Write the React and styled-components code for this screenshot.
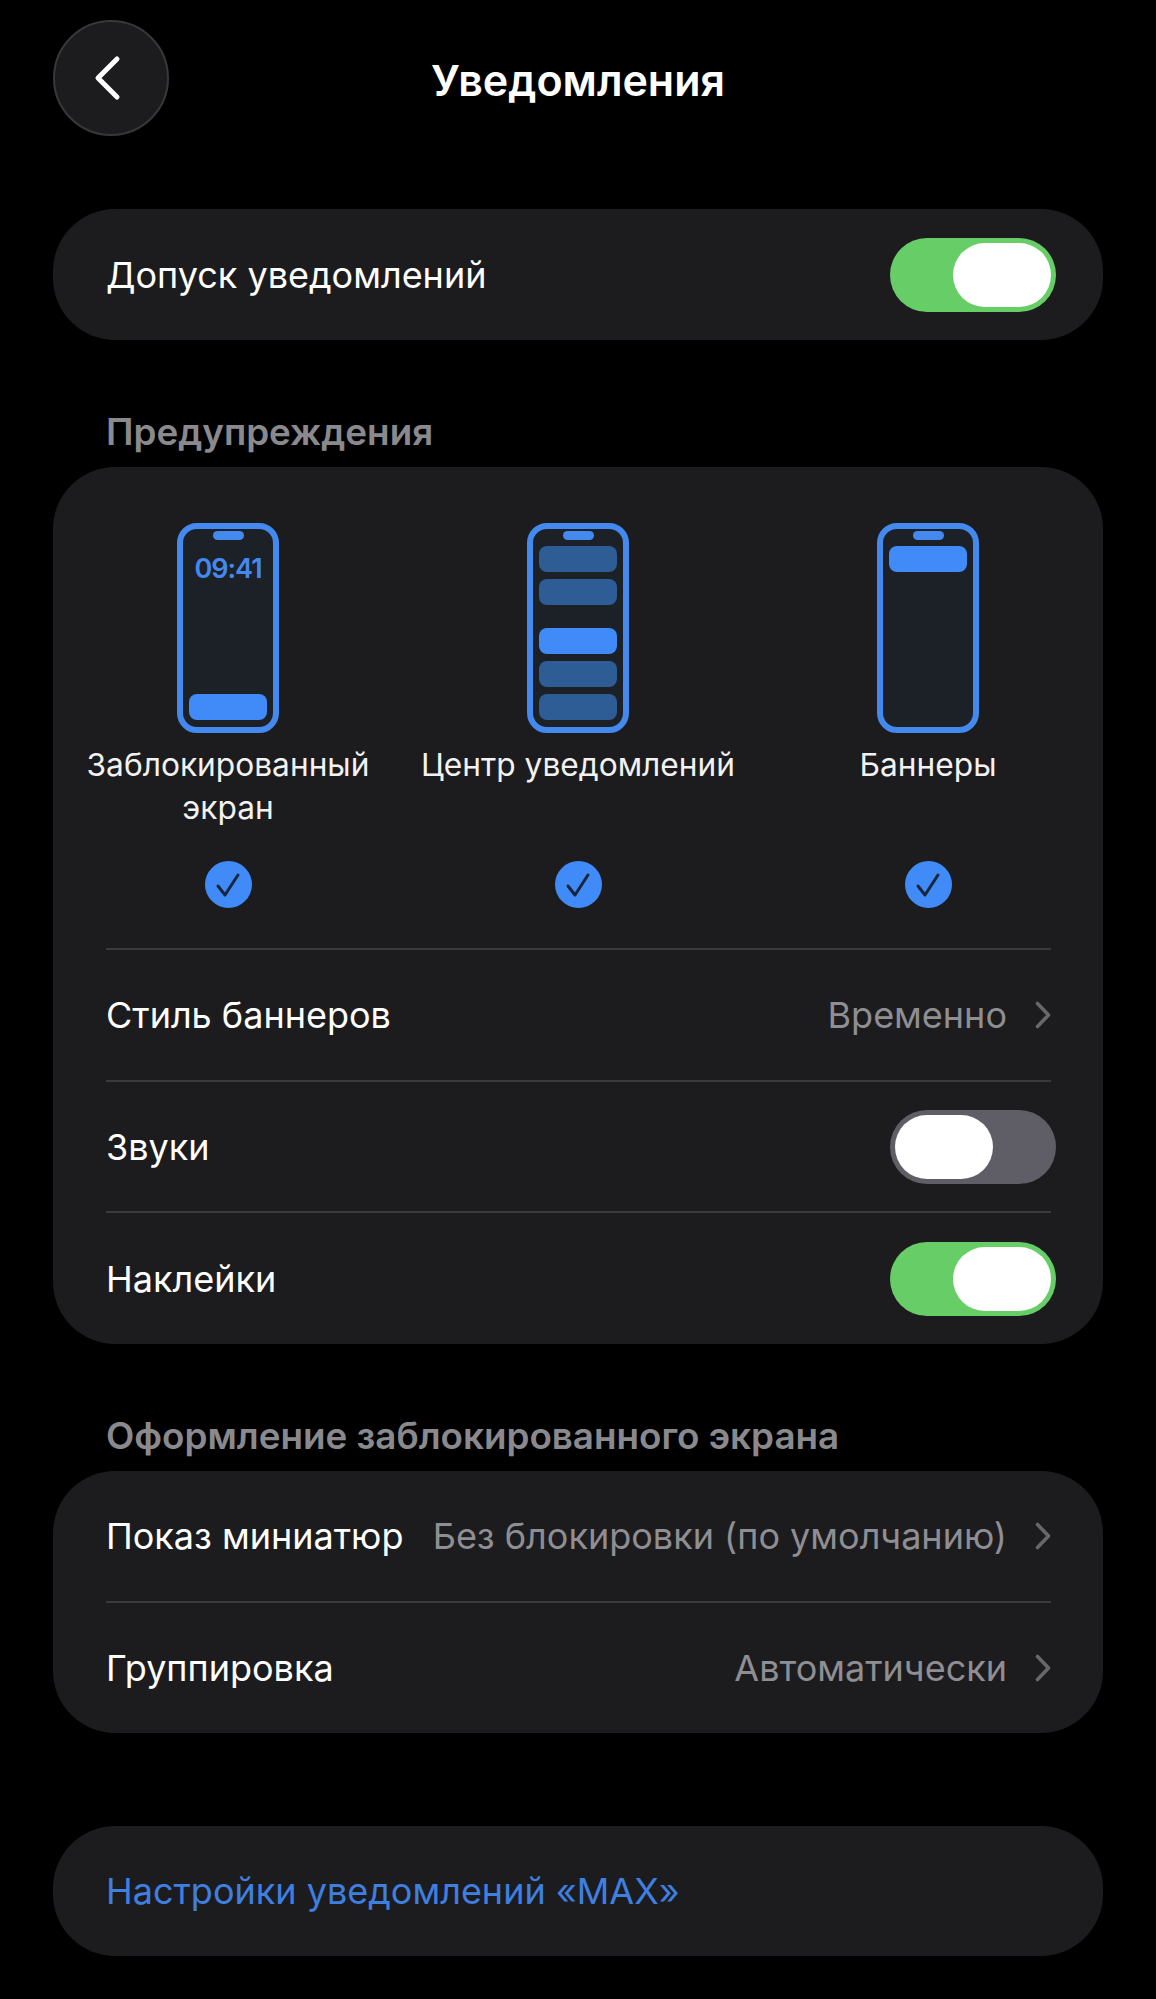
import React from "react";
import styled, { createGlobalStyle } from "styled-components";

const GlobalStyle = createGlobalStyle`
  html, body {
    margin: 0;
    padding: 0;
    background: #000;
  }
  * {
    box-sizing: border-box;
  }
`;

const Page = styled.div`
  width: 1156px;
  height: 1999px;
  padding: 20px 53px 0;
  background: #000;
  color: #fff;
  font-family: Inter, "Liberation Sans", sans-serif;
  overflow: hidden;
`;

const Header = styled.div`
  display: grid;
  grid-template-columns: 116px 1fr 116px;
  align-items: center;
  height: 116px;
`;

const BackButton = styled.div`
  width: 116px;
  height: 116px;
  border-radius: 50%;
  background: #1c1c1e;
  border: 2px solid #38383a;
  padding-right: 6px;
  display: flex;
  align-items: center;
  justify-content: center;
`;

const Title = styled.div`
  text-align: center;
  font-size: 43px;
  font-weight: 600;
  line-height: 48px;
  margin-top: 4px;
`;

const Card = styled.div`
  background: #1c1c1e;
  border-radius: 62px;
  margin-top: ${(p) => p.$top || 0}px;
`;

const SectionTitle = styled.div`
  margin: ${(p) => p.$top}px 0 15px;
  padding-left: 53px;
  font-size: 36.8px;
  font-weight: 600;
  line-height: 40px;
  color: #8a8a8e;
`;

const Row = styled.div`
  height: ${(p) => p.$height || 130}px;
  margin: 0 52px 0 53px;
  display: flex;
  align-items: center;
  justify-content: space-between;
  border-top: ${(p) => (p.$divider ? "2px solid #3a3a3c" : "none")};
`;

const Label = styled.span`
  font-size: 36px;
  color: ${(p) => p.$color || "#fff"};
`;

const ValueGroup = styled.div`
  display: flex;
  align-items: center;
  gap: 28px;
`;

const Value = styled.span`
  font-size: 36px;
  color: #8e8e93;
`;

const Options = styled.div`
  display: grid;
  grid-template-columns: repeat(3, 350px);
  padding: 56px 0 40px;
`;

const Option = styled.div`
  display: flex;
  flex-direction: column;
  align-items: center;
`;

const Phone = styled.div`
  width: 102px;
  height: 210px;
  border: 6px solid #4489ee;
  border-radius: 20px;
  background: #1c2127;
  padding: 2px 6px 7px;
  display: flex;
  flex-direction: column;
  align-items: center;
`;

const Island = styled.div`
  flex: none;
  width: 31px;
  height: 9px;
  border-radius: 5px;
  background: #4489ee;
`;

const Clock = styled.div`
  margin-top: 15px;
  font-size: 27px;
  line-height: 28px;
  font-weight: 600;
  letter-spacing: -1px;
  color: #4489ee;
`;

const Bar = styled.div`
  flex: none;
  width: 78px;
  height: 26px;
  border-radius: 8px;
  background: ${(p) => (p.$dim ? "#2e5c94" : "#408bf8")};
  margin-top: ${(p) => (p.$push ? "auto" : `${p.$top}px`)};
`;

const OptionLabel = styled.div`
  margin-top: 10px;
  min-height: 86px;
  width: 330px;
  text-align: center;
  font-size: 31.7px;
  line-height: 43px;
  color: #f2f2f2;
`;

const CheckCircle = styled.div`
  margin-top: 32px;
  width: 47px;
  height: 47px;
  border-radius: 50%;
  background: #408bf8;
  display: flex;
  align-items: center;
  justify-content: center;
`;

const Track = styled.div`
  width: 166px;
  height: 74px;
  margin-right: -5px;
  padding: 5px;
  border-radius: 37px;
  background: ${(p) => (p.$on ? "#67ce67" : "#5f5e66")};
  display: flex;
  justify-content: ${(p) => (p.$on ? "flex-end" : "flex-start")};
`;

const Thumb = styled.div`
  width: 98px;
  height: 64px;
  border-radius: 32px;
  background: #fff;
`;

function Toggle({ on }) {
  return (
    <Track $on={on}>
      <Thumb />
    </Track>
  );
}

function Chevron() {
  return (
    <svg width="16" height="28" viewBox="0 0 16 28" fill="none">
      <path d="M2.5 2.5 L13.5 14 L2.5 25.5" stroke="#67676c" strokeWidth="3.6" strokeLinecap="round" strokeLinejoin="round" />
    </svg>
  );
}

function Check() {
  return (
    <svg width="26" height="26" viewBox="0 0 26 26" fill="none">
      <path d="M3 14 L10 23 L23 3" stroke="#17263c" strokeWidth="3" strokeLinecap="round" strokeLinejoin="round" />
    </svg>
  );
}

function ValueRow({ label, value, divider, height }) {
  return (
    <Row $divider={divider} $height={height}>
      <Label>{label}</Label>
      <ValueGroup>
        <Value>{value}</Value>
        <Chevron />
      </ValueGroup>
    </Row>
  );
}

export default function App() {
  return (
    <Page>
      <GlobalStyle />
      <Header>
        <BackButton>
          <svg width="30" height="46" viewBox="0 0 30 46" fill="none">
            <path d="M24 4 L5 23 L24 42" stroke="#fff" strokeWidth="5" strokeLinecap="round" strokeLinejoin="round" />
          </svg>
        </BackButton>
        <Title>Уведомления</Title>
      </Header>

      <Card $top={73}>
        <Row $height={131}>
          <Label>Допуск уведомлений</Label>
          <Toggle on />
        </Row>
      </Card>

      <SectionTitle $top={72}>Предупреждения</SectionTitle>
      <Card>
        <Options>
          <Option>
            <Phone>
              <Island />
              <Clock>09:41</Clock>
              <Bar $push />
            </Phone>
            <OptionLabel>Заблокированный экран</OptionLabel>
            <CheckCircle><Check /></CheckCircle>
          </Option>
          <Option>
            <Phone>
              <Island />
              <Bar $dim $top={6} />
              <Bar $dim $top={7} />
              <Bar $top={23} />
              <Bar $dim $top={7} />
              <Bar $dim $top={7} />
            </Phone>
            <OptionLabel>Центр уведомлений</OptionLabel>
            <CheckCircle><Check /></CheckCircle>
          </Option>
          <Option>
            <Phone>
              <Island />
              <Bar $top={6} />
            </Phone>
            <OptionLabel>Баннеры</OptionLabel>
            <CheckCircle><Check /></CheckCircle>
          </Option>
        </Options>
        <ValueRow divider label="Стиль баннеров" value="Временно" height={132} />
        <Row $divider $height={131}>
          <Label>Звуки</Label>
          <Toggle />
        </Row>
        <Row $divider $height={133}>
          <Label>Наклейки</Label>
          <Toggle on />
        </Row>
      </Card>

      <SectionTitle $top={72}>Оформление заблокированного экрана</SectionTitle>
      <Card>
        <ValueRow label="Показ миниатюр" value="Без блокировки (по умолчанию)" height={130} />
        <ValueRow divider label="Группировка" value="Автоматически" height={132} />
      </Card>

      <Card $top={93}>
        <Row $height={130}>
          <Label $color="#3f7fe0">Настройки уведомлений «MAX»</Label>
        </Row>
      </Card>
    </Page>
  );
}
